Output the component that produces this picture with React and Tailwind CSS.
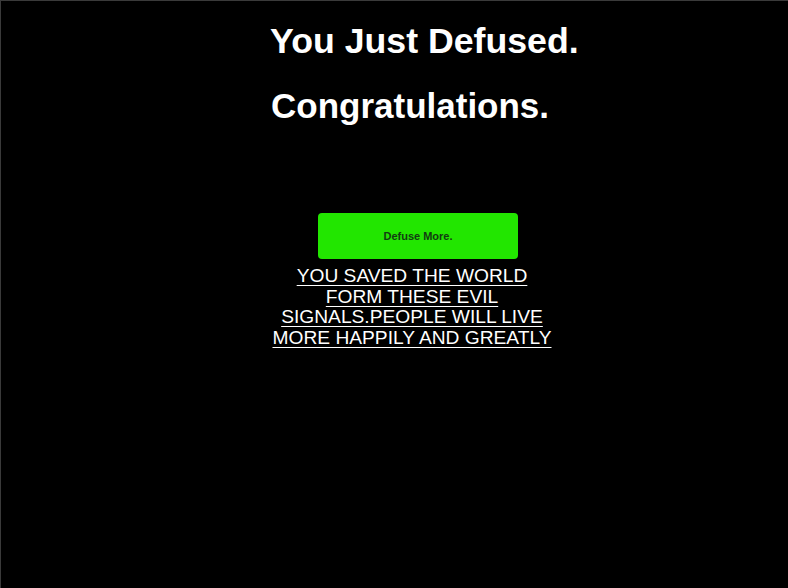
import React from "react";

export default function App() {
  return (
    <div className="min-h-[588px] w-full bg-black border-t border-l border-[#3a3a3a] font-['Liberation_Sans',Arial,sans-serif]">
      <div className="pl-[269px] pt-[20px]">
        <h1 className="text-[35.7px] font-bold leading-[40px] text-white">You Just Defused.</h1>
        <h2 className="mt-[25px] pl-[1px] text-[35px] font-bold leading-[40px] text-white">Congratulations.</h2>
        <button className="mt-[87px] ml-[48px] flex h-[46px] w-[200px] items-center justify-center rounded-[4px] bg-[#22e600] text-[11px] font-bold text-[#123d12]">
          Defuse More.
        </button>
        <p className="mt-[7px] -ml-[1px] w-[286px] text-center text-[19.2px] leading-[20.7px] uppercase text-white underline underline-offset-[3px]">
          You saved the world form these evil signals.people will live more happily and greatly
        </p>
      </div>
    </div>
  );
}
